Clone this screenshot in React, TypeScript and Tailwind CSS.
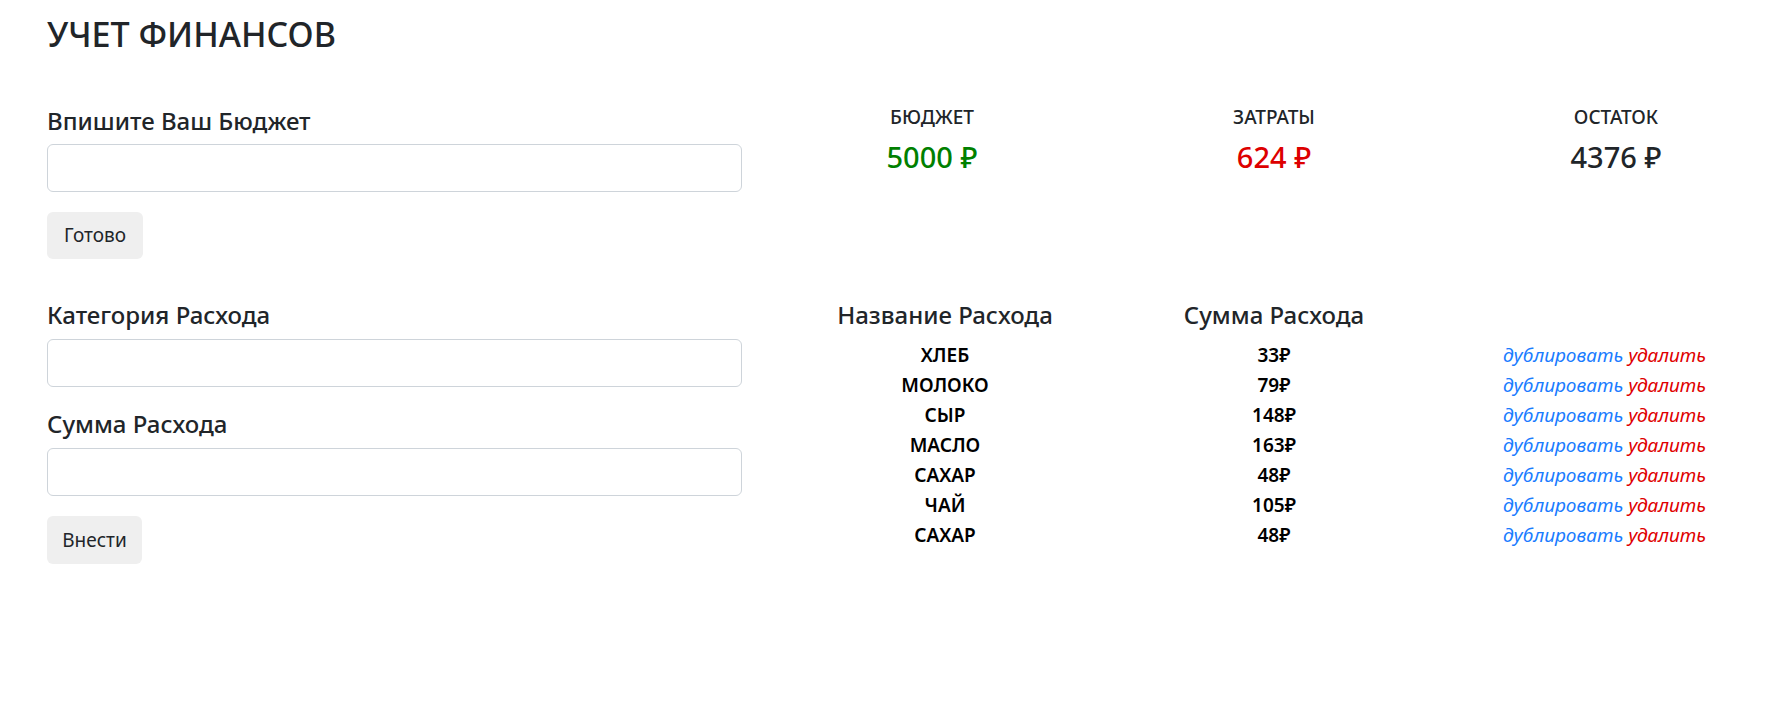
import { useState } from "react";

type Expense = { id: number; name: string; amount: number };

const initial: Expense[] = [
  { id: 1, name: "ХЛЕБ", amount: 33 },
  { id: 2, name: "МОЛОКО", amount: 79 },
  { id: 3, name: "СЫР", amount: 148 },
  { id: 4, name: "МАСЛО", amount: 163 },
  { id: 5, name: "САХАР", amount: 48 },
  { id: 6, name: "ЧАЙ", amount: 105 },
  { id: 7, name: "САХАР", amount: 48 },
];

const App = () => {
  const [budget, setBudget] = useState(5000);
  const [budgetInput, setBudgetInput] = useState("");
  const [category, setCategory] = useState("");
  const [sum, setSum] = useState("");
  const [items, setItems] = useState<Expense[]>(initial);

  const spent = items.reduce((acc, i) => acc + i.amount, 0);

  const addExpense = () => {
    if (!category || !sum) return;
    setItems([...items, { id: Date.now(), name: category.toUpperCase(), amount: Number(sum) }]);
    setCategory("");
    setSum("");
  };

  return (
    <main
      className="w-full min-h-screen bg-white text-[#212529] overflow-hidden px-[47px] pt-[14px]"
      style={{ fontFamily: "'Noto Sans', 'Open Sans', sans-serif" }}
    >
      <h1 className="text-[34px] leading-[41px] font-medium">УЧЕТ ФИНАНСОВ</h1>

      <div className="grid grid-cols-[695px_1026px] gap-x-[19px] mt-[51px]">
        <div className="flex flex-col">
          <label className="text-[24px] leading-[29px] font-medium mb-[9px]">Впишите Ваш Бюджет</label>
          <input
            className="h-[48px] border border-[#ced4da] rounded-[6px] px-4 text-[20px] outline-none"
            value={budgetInput}
            onChange={(e) => setBudgetInput(e.target.value)}
          />
          <button
            className="mt-[20px] w-[96px] h-[47px] bg-[#efefef] rounded-[6px] text-[19px]"
            onClick={() => budgetInput && setBudget(Number(budgetInput))}
          >
            Готово
          </button>
        </div>

        <div className="grid grid-cols-[342px_342px_342px]">
          <div className="flex flex-col items-center">
            <p className="text-[19px] leading-[22px] font-medium">БЮДЖЕТ</p>
            <p className="text-[29px] leading-[36px] font-medium text-[#008000] mt-[11px]">{budget} ₽</p>
          </div>
          <div className="flex flex-col items-center">
            <p className="text-[19px] leading-[22px] font-medium">ЗАТРАТЫ</p>
            <p className="text-[29px] leading-[36px] font-medium text-[#dd0000] mt-[11px]">{spent} ₽</p>
          </div>
          <div className="flex flex-col items-center">
            <p className="text-[19px] leading-[22px] font-medium">ОСТАТОК</p>
            <p className="text-[29px] leading-[36px] font-medium mt-[11px]">{budget - spent} ₽</p>
          </div>
        </div>

        <div className="flex flex-col mt-[41px]">
          <label className="text-[24px] leading-[29px] font-medium mb-[10px]">Категория Расхода</label>
          <input
            className="h-[48px] border border-[#ced4da] rounded-[6px] px-4 text-[20px] outline-none"
            value={category}
            onChange={(e) => setCategory(e.target.value)}
          />
          <label className="text-[24px] leading-[29px] font-medium mt-[22px] mb-[10px]">Сумма Расхода</label>
          <input
            className="h-[48px] border border-[#ced4da] rounded-[6px] px-4 text-[20px] outline-none"
            value={sum}
            onChange={(e) => setSum(e.target.value)}
          />
          <button
            className="mt-[20px] w-[95px] h-[48px] bg-[#efefef] rounded-[6px] text-[19px]"
            onClick={addExpense}
          >
            Внести
          </button>
        </div>

        <div className="mt-[41px]">
          <div className="grid grid-cols-[368px_290px_287px] mb-[11px]">
            <span className="text-[24px] leading-[29px] font-medium text-center">Название Расхода</span>
            <span className="text-[24px] leading-[29px] font-medium text-center">Сумма Расхода</span>
            <span />
          </div>
          {items.map((item) => (
            <div key={item.id} className="grid grid-cols-[368px_290px_287px] h-[30px] items-center text-[19px]">
              <span className="text-center font-semibold text-black">{item.name}</span>
              <span className="text-center font-semibold text-black">{item.amount}₽</span>
              <span className="text-right italic">
                <button
                  className="text-[#1a7cff] italic"
                  onClick={() => setItems([...items, { ...item, id: Date.now() }])}
                >
                  дублировать
                </button>{" "}
                <button
                  className="text-[#e00000] italic"
                  onClick={() => setItems(items.filter((i) => i.id !== item.id))}
                >
                  удалить
                </button>
              </span>
            </div>
          ))}
        </div>
      </div>
    </main>
  );
};

export default App;
